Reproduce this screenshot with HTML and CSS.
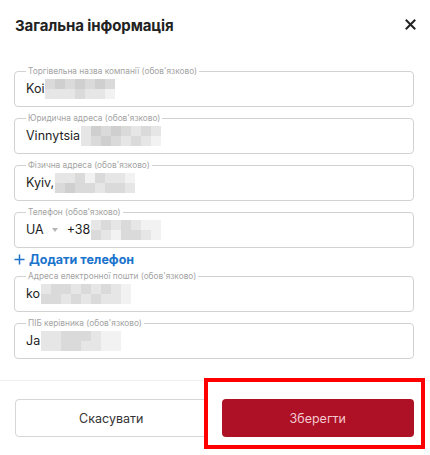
FILE: index.html
```html
<!DOCTYPE html>
<html lang="uk">
<head>
<meta charset="utf-8">
<link rel="stylesheet" href="styles.css">
</head>
<body>
<div class="modal">
  <div class="header">
    <h1 class="title">Загальна інформація</h1>
    <button class="close" aria-label="close">
      <svg width="11" height="11" viewBox="0 0 11 11"><path d="M1.5 1.5 L9.5 9.5 M9.5 1.5 L1.5 9.5" stroke="#222" stroke-width="2" stroke-linecap="square"/></svg>
    </button>
  </div>
  <div class="fields">
    <fieldset class="field">
      <legend>Торгівельна назва компанії (обов'язково)</legend>
      <div class="value">Koi<span class="blur"><span class="row"><i class="c2"></i><i class="c1"></i><i class="c2"></i><i class="c1"></i><i class="c2"></i><i class="c1"></i><i class="c2"></i></span><span class="row"><i class="c3"></i><i class="c3"></i><i class="c3"></i><i class="c2"></i><i class="c3"></i><i class="c3"></i><i class="c4"></i></span></span></div>
    </fieldset>
    <fieldset class="field">
      <legend>Юридична адреса (обов'язково)</legend>
      <div class="value">Vinnytsia<span class="blur"><span class="row"><i class="c3"></i><i class="c1"></i><i class="c2"></i><i class="c1"></i><i class="c2"></i><i class="c3"></i><i class="c2"></i><i class="c3"></i></span><span class="row"><i class="c3"></i><i class="c2"></i><i class="c1"></i><i class="c2"></i><i class="c3"></i><i class="c2"></i><i class="c3"></i><i class="c4"></i></span></span></div>
    </fieldset>
    <fieldset class="field">
      <legend>Фізична адреса (обов'язково)</legend>
      <div class="value">Kyiv, <span class="blur"><span class="row"><i class="c3"></i><i class="c3"></i><i class="c2"></i><i class="c4"></i><i class="c2"></i><i class="c3"></i><i class="c3"></i><i class="c4"></i></span><span class="row"><i class="c2"></i><i class="c1"></i><i class="c2"></i><i class="c2"></i><i class="c3"></i><i class="c2"></i><i class="c2"></i><i class="c3"></i></span></span></div>
    </fieldset>
    <fieldset class="field">
      <legend>Телефон (обов'язково)</legend>
      <div class="value"><span class="country">UA</span><span class="caret"></span><span class="phone">+38</span><span class="blur"><span class="row"><i class="c3"></i><i class="c2"></i><i class="c3"></i><i class="c2"></i><i class="c3"></i><i class="c4"></i><i class="c4"></i></span><span class="row"><i class="c2"></i><i class="c3"></i><i class="c4"></i><i class="c2"></i><i class="c2"></i><i class="c3"></i><i class="c4"></i></span></span></div>
    </fieldset>
    <a class="add-phone" href="#">
      <svg width="11" height="11" viewBox="0 0 11 11"><path d="M5.5 0.5 V10.5 M0.5 5.5 H10.5" stroke="#1a73cc" stroke-width="1.5"/></svg>
      <span>Додати телефон</span>
    </a>
    <fieldset class="field">
      <legend>Адреса електронної пошти (обов'язково)</legend>
      <div class="value">ko<span class="blur"><span class="row"><i class="c3"></i><i class="c2"></i><i class="c2"></i><i class="c3"></i><i class="c2"></i><i class="c3"></i><i class="c2"></i><i class="c3"></i><i class="c4"></i></span><span class="row"><i class="c2"></i><i class="c2"></i><i class="c3"></i><i class="c2"></i><i class="c3"></i><i class="c2"></i><i class="c3"></i><i class="c3"></i><i class="c4"></i></span></span></div>
    </fieldset>
    <fieldset class="field">
      <legend>ПІБ керівника (обов'язково)</legend>
      <div class="value">Ja<span class="blur"><span class="row"><i class="c3"></i><i class="c3"></i><i class="c2"></i><i class="c2"></i><i class="c2"></i><i class="c3"></i><i class="c4"></i><i class="c4"></i></span><span class="row"><i class="c3"></i><i class="c3"></i><i class="c2"></i><i class="c2"></i><i class="c3"></i><i class="c3"></i><i class="c4"></i><i class="c4"></i></span></span></div>
    </fieldset>
  </div>
  <div class="footer">
    <button class="btn btn-cancel">Скасувати</button>
    <div class="save-wrap">
      <button class="btn btn-save">Зберегти</button>
      <span class="highlight"></span>
    </div>
  </div>
</div>
</body>
</html>
```
FILE: styles.css
```css
* { box-sizing: border-box; }
html, body { margin: 0; padding: 0; background: #fff; }
body { font-family: Inter, "Noto Sans", "DejaVu Sans", sans-serif; color: #222; }

.modal { width: 430px; height: 455px; }

.header {
  display: flex;
  align-items: flex-start;
  justify-content: space-between;
  padding: 15px 14px 0 15px;
  height: 52px;
}
.title {
  margin: 0;
  font-size: 15px;
  font-weight: 700;
  line-height: 22px;
  color: #222;
  letter-spacing: -0.1px;
}
.close {
  border: 0;
  background: none;
  padding: 0;
  margin-top: 4px;
  width: 11px;
  height: 11px;
  display: flex;
}

.fields {
  display: flex;
  flex-direction: column;
  gap: 6px;
  padding: 14px 16px 0 14px;
}
.field {
  margin: 0;
  padding: 0 11px 2px;
  border: 1px solid #d2d2d2;
  border-radius: 4px;
  min-width: 0;
}
.field legend {
  font-size: 8.3px;
  line-height: 10px;
  color: #a3a3a3;
  padding: 0 2px;
  white-space: nowrap;
}
.value {
  height: 28px;
  display: flex;
  align-items: center;
  font-size: 12.5px;
  color: #1e1e1e;
  padding-bottom: 3px;
}

.blur { display: inline-flex; flex-direction: column; margin-left: 1px; }
.blur .row { display: flex; }
.blur i { display: block; width: 10px; height: 10px; }
.c1 { background: #cfcfcf; }
.c2 { background: #dadada; }
.c3 { background: #e6e6e6; }
.c4 { background: #f2f2f2; }

.country { margin-right: 8px; }
.caret {
  width: 0; height: 0;
  border-left: 3.5px solid transparent;
  border-right: 3.5px solid transparent;
  border-top: 4px solid #b5b5b5;
  margin-right: 9px;
}

.add-phone {
  display: flex;
  align-items: center;
  gap: 4px;
  margin: -3px 0 -3px 0;
  color: #1a73cc;
  text-decoration: none;
  font-weight: 700;
  font-size: 12.5px;
  line-height: 17px;
}

.footer {
  margin-top: 21px;
  border-top: 1px solid #efefef;
  padding: 18px 16px 17px 15px;
  display: grid;
  grid-template-columns: 1fr 1fr;
  gap: 14px;
}
.btn {
  height: 38px;
  width: 100%;
  border-radius: 4px;
  font-family: inherit;
  font-size: 12.5px;
  display: block;
}
.btn-cancel { background: #fff; border: 1px solid #d6d6d6; color: #333; }
.btn-save { background: #ae1025; border: 0; color: #f3c9cf; }
.save-wrap { position: relative; }
.highlight {
  position: absolute;
  left: -18px;
  top: -21px;
  right: -11px;
  bottom: -12px;
  border: 4px solid #ff0000;
  pointer-events: none;
}
```
